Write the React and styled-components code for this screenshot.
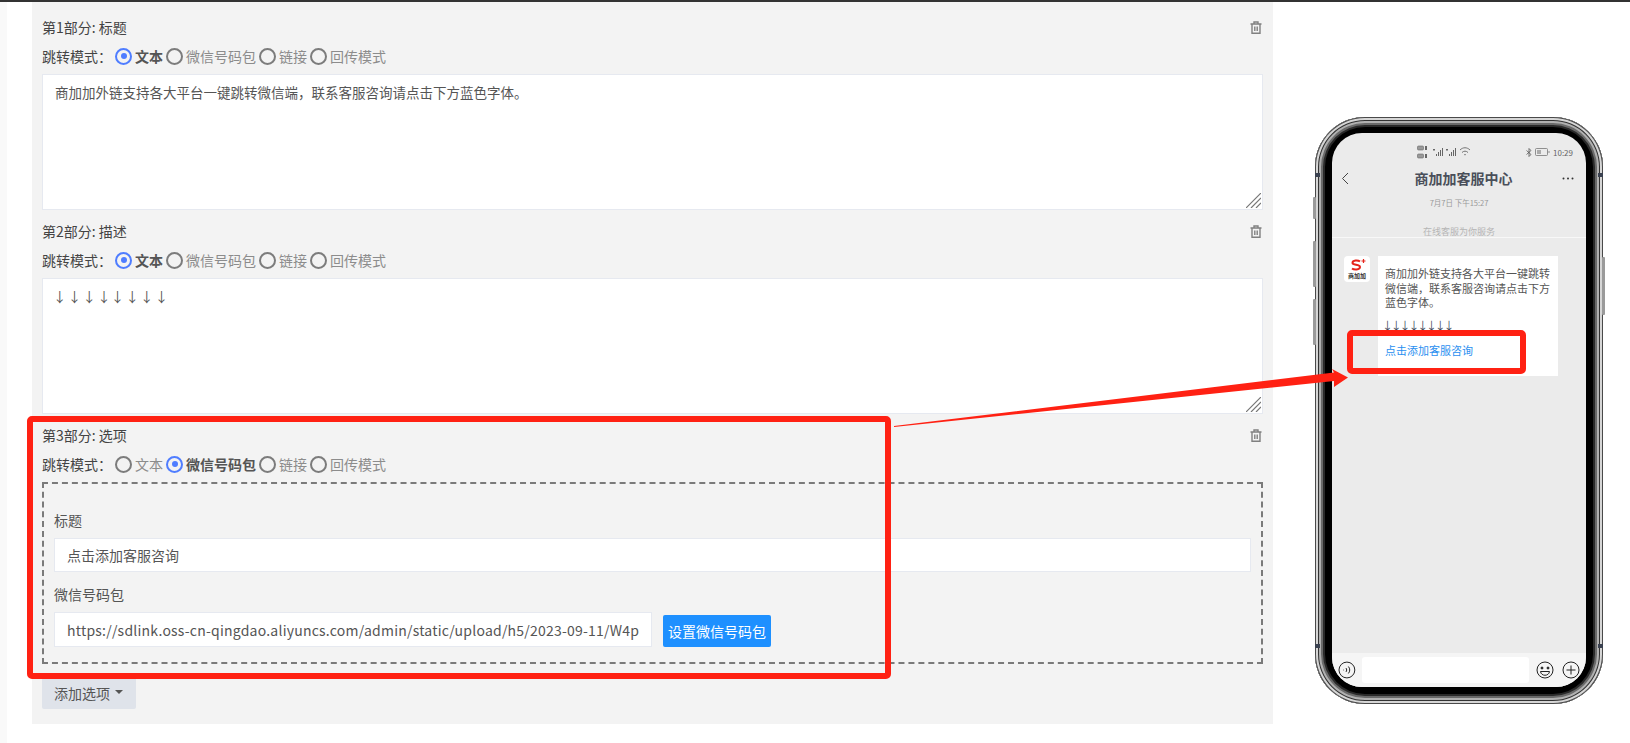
import styled, { createGlobalStyle } from "styled-components";

const GlobalStyle = createGlobalStyle`
  html, body {
    margin: 0;
    padding: 0;
    height: 743px;
    overflow: hidden;
    background: #fff;
  }
  * { box-sizing: border-box; }
`;

const FONT = `"Noto Sans CJK SC", "Noto Sans", sans-serif`;

const Page = styled.div`
  position: relative;
  display: flex;
  width: 1630px;
  height: 743px;
  border-top: 2px solid #333;
  font-family: ${FONT};
  font-size: 14px;
  color: #444;
  overflow: hidden;
`;

const Sidebar = styled.div`
  width: 7px;
  background: #f9f9f9;
`;

const Panel = styled.div`
  width: 1241px;
  height: 722px;
  margin-left: 25px;
  padding: 15px 10px 0;
  background: #f3f3f3;
`;

const Section = styled.section`
  margin-bottom: ${(p) => (p.$last ? 0 : 11)}px;
`;

const SectionHead = styled.div`
  display: flex;
  justify-content: space-between;
  align-items: center;
  height: 20px;
  line-height: 20px;
`;

const TrashBtn = styled.span`
  display: flex;
  margin-right: 1px;
  color: #808080;
`;

const ModeRow = styled.div`
  display: flex;
  align-items: center;
  height: 20px;
  margin: 9px 0 8px;
  line-height: 20px;
`;

const ModeLabel = styled.span`
  width: 73px;
  white-space: nowrap;
`;

const RadioItem = styled.label`
  display: flex;
  align-items: center;
  margin-right: 3px;
  color: ${(p) => (p.$on ? "#555" : "#8c8c8c")};
  font-weight: ${(p) => (p.$on ? 700 : 400)};
`;

const RadioDot = styled.span`
  display: flex;
  align-items: center;
  justify-content: center;
  width: 17px;
  height: 17px;
  margin-right: 3px;
  border-radius: 50%;
  border: ${(p) => (p.$on ? "2.5px solid #4f7dff" : "2px solid #7c7c7c")};

  &::after {
    content: "";
    display: ${(p) => (p.$on ? "block" : "none")};
    width: 6px;
    height: 6px;
    border-radius: 50%;
    background: #4f7dff;
  }
`;

const AreaWrap = styled.div`
  position: relative;
  height: 136px;
`;

const TextArea = styled.textarea`
  display: block;
  width: 100%;
  height: 100%;
  padding: 5px 12px;
  border: 1px solid #e6e9f0;
  background: #fff;
  color: #555;
  font: 13.5px/24px ${FONT};
  word-spacing: ${(p) => p.$wordGap || 0}px;
  text-indent: ${(p) => p.$indent || 0}px;
  resize: none;
  outline: none;
`;

const Grip = styled.svg`
  position: absolute;
  right: 2px;
  bottom: 2px;
`;

const DashedBox = styled.div`
  height: 182px;
  padding: 26px 10px 0;
  border: 2px dashed #7a7a7a;
`;

const FieldLabel = styled.div`
  height: 20px;
  margin-bottom: 8px;
  line-height: 20px;
  color: #555;
`;

const TextInput = styled.input`
  display: block;
  width: ${(p) => p.$w || "100%"};
  height: ${(p) => p.$h || 34}px;
  padding: 0 12px;
  border: 1px solid #e6e9f0;
  background: #fff;
  color: #555;
  font: 14px ${FONT};
  letter-spacing: ${(p) => p.$track || 0}px;
  outline: none;
`;

const Gap = styled.div`
  height: 12px;
`;

const InputRow = styled.div`
  display: flex;
  align-items: flex-start;
`;

const BlueBtn = styled.button`
  width: 108px;
  height: 32px;
  margin: 3px 0 0 11px;
  padding: 0;
  border: none;
  border-radius: 2px;
  background: #1e90ff;
  color: #fff;
  font: 14px ${FONT};
`;

const AddBtn = styled.button`
  display: flex;
  align-items: center;
  gap: 5px;
  width: 94px;
  height: 32px;
  margin-top: 13px;
  padding: 0 0 0 12px;
  border: none;
  border-radius: 2px;
  background: #dfe3ea;
  color: #555;
  font: 14px ${FONT};

  &::after {
    content: "";
    margin-top: -2px;
    border-top: 4px solid #555;
    border-left: 4px solid transparent;
    border-right: 4px solid transparent;
  }
`;

const RedFrame = styled.div`
  position: absolute;
  left: ${(p) => p.$x}px;
  top: ${(p) => p.$y}px;
  width: ${(p) => p.$w}px;
  height: ${(p) => p.$h}px;
  border: 6px solid #ff2113;
  border-radius: 5px;
  pointer-events: none;
`;

const ArrowLayer = styled.svg`
  position: absolute;
  left: 0;
  top: -2px;
  pointer-events: none;
`;

/* phone */
const Phone = styled.div`
  position: relative;
  width: 288px;
  height: 587px;
  margin: 115px 0 0 42px;
  padding: 16px 17px 17px;
  border-radius: 50px;
  background: #000;
  box-shadow:
    inset 0 0 0 1px #4a4a4a,
    inset 0 0 0 3px #d6d6d6,
    inset 0 0 0 4px #333,
    inset 0 0 0 6px #b0b0b0,
    inset 0 0 0 8px #6a6a6a,
    inset 0 0 0 10px #2a2a2a;
`;

const SideKey = styled.span`
  position: absolute;
  top: ${(p) => p.$y}px;
  height: ${(p) => p.$h}px;
  ${(p) => (p.$right ? "right: -2px;" : "left: -2px;")}
  width: 3px;
  background: #9a9a9a;
  border-radius: 1px;
`;

const Notch = styled.span`
  position: absolute;
  top: ${(p) => p.$y}px;
  ${(p) => (p.$right ? "right: 0;" : "left: 0;")}
  width: 5px;
  height: 4px;
  background: #3a4150;
`;

const Screen = styled.div`
  display: flex;
  flex-direction: column;
  height: 100%;
  border-radius: 30px;
  background: #ebebeb;
  overflow: hidden;
  font-size: 11px;
`;

const StatusBar = styled.div`
  display: flex;
  align-items: center;
  height: 31px;
  padding: 7px 13px 0 85px;
  color: #666;
  font-size: 8px;
`;

const StatusRight = styled.div`
  display: flex;
  align-items: center;
  gap: 3px;
  margin-left: auto;
`;

const NavBar = styled.div`
  display: flex;
  align-items: center;
  justify-content: space-between;
  height: 28px;
  padding: 0 12px 0 9px;
`;

const NavTitle = styled.div`
  margin-left: 16px;
  color: #4a4f5a;
  font-size: 14px;
  font-weight: 700;
`;

const DateText = styled.div`
  margin-top: 4px;
  height: 14px;
  line-height: 14px;
  text-align: center;
  color: #999;
  font-size: 7.5px;
`;

const NoticeText = styled.div`
  height: 28px;
  padding-top: 16px;
  line-height: 12px;
  text-align: center;
  color: #b5b5b5;
  font-size: 9px;
  border-bottom: 1px solid #f8f8f8;
`;

const ChatArea = styled.div`
  flex: 1;
  display: flex;
  align-items: flex-start;
  gap: 8px;
  padding: 18px 28px 0 12px;
`;

const Avatar = styled.div`
  display: flex;
  flex-direction: column;
  align-items: center;
  flex: none;
  width: 26px;
  height: 26px;
  padding-top: 3px;
  border-radius: 4px;
  background: #fff;
`;

const AvatarName = styled.span`
  color: #333;
  font-size: 6px;
  font-weight: 700;
  line-height: 8px;
`;

const Bubble = styled.div`
  width: 181px;
  height: 120px;
  padding: 10px 7px;
  background: #fff;
  color: #555;
  line-height: 14.5px;
`;

const BubbleArrows = styled.div`
  margin: 8px 0 0 -3px;
  white-space: nowrap;
  color: #3f4a5c;
  font-size: 11px;
  letter-spacing: -2.2px;
`;

const BubbleLink = styled.div`
  margin-top: 11px;
  color: #2a8ff0;
`;

const InputBar = styled.div`
  display: flex;
  align-items: center;
  gap: 6px;
  height: 34px;
  padding: 0 6px;
  background: #f5f5f5;
`;

const BarInput = styled.div`
  width: 169px;
  height: 26px;
  margin-right: 1px;
  border-radius: 3px;
  background: #fff;
`;

const BarIcons = styled.div`
  display: flex;
  gap: 8px;
`;

const Trash = () => (
  <svg width="12" height="13" viewBox="0 0 12 13" fill="none" stroke="currentColor" strokeWidth="1.4">
    <path d="M0.5 3h11M4 3V1h4v2M2 3v9.200h8V3M4.800 5.500v4.500M7.200 5.500v4.500" />
  </svg>
);

const ResizeGrip = () => (
  <Grip width="15" height="15" viewBox="0 0 15 15" stroke="#777" strokeWidth="1.2">
    <path d="M0 15L15 0M5 15L15 5M10 15L15 10" />
  </Grip>
);

const Bt = () => (
  <svg width="6" height="9" viewBox="0 0 6 9" fill="none" stroke="#555" strokeWidth="0.8">
    <path d="M0.500 2.500L5 6.500L3 8.500V0.500L5 2.500L0.500 6.500" />
  </svg>
);

const Battery = () => (
  <svg width="15" height="8" viewBox="0 0 15 8" fill="none" stroke="#777" strokeWidth="0.8">
    <rect x="0.500" y="0.500" width="12" height="7" rx="1" />
    <rect x="2" y="2" width="4" height="4" fill="#aaa" stroke="none" />
    <path d="M14 3v2" />
  </svg>
);

const Signals = () => (
  <svg width="56" height="14" viewBox="0 0 56 14" fill="#666">
    <rect x="0.500" y="1" width="6" height="4" rx="1" fill="#999" stroke="#666" strokeWidth="0.6" />
    <rect x="0.500" y="9" width="6" height="4" rx="1" fill="#999" stroke="#666" strokeWidth="0.6" />
    <rect x="8" y="1" width="2" height="4" />
    <rect x="8" y="9" width="2" height="4" />
    <path d="M16 4h2v1.500h-2zM19 11h1V9h-1zM21 11h1V7h-1zM23 11h1V5h-1zM25 11h1V3h-1z" />
    <path d="M29 4h2v1.500h-2zM32 11h1V9h-1zM34 11h1V7h-1zM36 11h1V5h-1zM38 11h1V3h-1z" />
    <path d="M43 5c3-3 7-3 10 0M45 7.500c2-1.800 4-1.800 6 0M47 10c.6-.6 1.400-.6 2 0" fill="none" stroke="#666" strokeWidth="0.9" />
  </svg>
);

const Logo = () => (
  <svg width="17" height="13" viewBox="0 0 17 13" fill="none">
    <path d="M11 2.500C9 1 3.500 1 3.500 4C3.500 6.500 11 5 11 8C11 11 5 11 3 9.500" stroke="#e5231b" strokeWidth="2" />
    <path d="M14.500 0v4M12.500 2h4" stroke="#e5231b" strokeWidth="1.200" />
  </svg>
);

const Circle = ({ children }) => (
  <svg width="18" height="18" viewBox="0 0 18 18" fill="none" stroke="#222" strokeWidth="1">
    <circle cx="9" cy="9" r="8" />
    {children}
  </svg>
);

const Chevron = () => (
  <svg width="8" height="13" viewBox="0 0 8 13" fill="none" stroke="#444" strokeWidth="1">
    <path d="M7 1L1.500 6.500L7 12" />
  </svg>
);

const Dots = () => (
  <svg width="12" height="3" viewBox="0 0 12 3" fill="#333">
    <circle cx="1.500" cy="1.500" r="1" />
    <circle cx="6" cy="1.500" r="1" />
    <circle cx="10.500" cy="1.500" r="1" />
  </svg>
);

const MODES = ["文本", "微信号码包", "链接", "回传模式"];

// \uFF0C = full-width comma, \uFF1A = full-width colon
const INTRO = "商加加外链支持各大平台一键跳转微信端\uFF0C联系客服咨询请点击下方蓝色字体。";

const ModeSwitch = ({ active }) => (
  <ModeRow>
    <ModeLabel>{"跳转模式\uFF1A"}</ModeLabel>
    {MODES.map((m, i) => (
      <RadioItem key={m} $on={i === active}>
        <RadioDot $on={i === active} />
        {m}
      </RadioItem>
    ))}
  </ModeRow>
);

const SectionTitle = ({ title }) => (
  <SectionHead>
    {title}
    <TrashBtn>
      <Trash />
    </TrashBtn>
  </SectionHead>
);

const TextPart = ({ title, text, wordGap, indent }) => (
  <Section>
    <SectionTitle title={title} />
    <ModeSwitch active={0} />
    <AreaWrap>
      <TextArea readOnly defaultValue={text} $wordGap={wordGap} $indent={indent} />
      <ResizeGrip />
    </AreaWrap>
  </Section>
);

const PhoneMock = () => (
  <Phone>
    <SideKey $y={80} $h={22} />
    <SideKey $y={124} $h={46} />
    <SideKey $y={182} $h={46} />
    <SideKey $right $y={140} $h={58} />
    <Notch $y={56} />
    <Notch $right $y={56} />
    <Notch $y={527} />
    <Notch $right $y={527} />
    <Screen>
      <StatusBar>
        <Signals />
        <StatusRight>
          <Bt />
          <Battery />
          10:29
        </StatusRight>
      </StatusBar>
      <NavBar>
        <Chevron />
        <NavTitle>商加加客服中心</NavTitle>
        <Dots />
      </NavBar>
      <DateText>7月7日 下午15:27</DateText>
      <NoticeText>在线客服为你服务</NoticeText>
      <ChatArea>
        <Avatar>
          <Logo />
          <AvatarName>商加加</AvatarName>
        </Avatar>
        <Bubble>
          {INTRO}
          <BubbleArrows>↓↓↓↓↓↓↓↓</BubbleArrows>
          <BubbleLink>点击添加客服咨询</BubbleLink>
        </Bubble>
      </ChatArea>
      <InputBar>
        <Circle>
          <path d="M5.500 9h.6M8 7c1 1 1 3 0 4M10.500 5.500c1.800 2 1.800 5 0 7" />
        </Circle>
        <BarInput />
        <BarIcons>
          <Circle>
            <circle cx="6" cy="7" r="1" fill="#222" />
            <circle cx="12" cy="7" r="1" fill="#222" />
            <path d="M4.500 10.500h9c-.5 5-8.500 5-9 0z" />
          </Circle>
          <Circle>
            <path d="M4.500 9h9M9 4.500v9" />
          </Circle>
        </BarIcons>
      </InputBar>
    </Screen>
  </Phone>
);

export default function App() {
  return (
    <>
      <GlobalStyle />
      <Page>
        <Sidebar />
        <Panel>
          <TextPart title="第1部分: 标题" text={INTRO} />
          <TextPart title="第2部分: 描述" text="↓ ↓ ↓ ↓↓ ↓ ↓ ↓" wordGap={-1.8} indent={-2} />
          <Section $last>
            <SectionTitle title="第3部分: 选项" />
            <ModeSwitch active={1} />
            <DashedBox>
              <FieldLabel>标题</FieldLabel>
              <TextInput readOnly value="点击添加客服咨询" />
              <Gap />
              <FieldLabel>微信号码包</FieldLabel>
              <InputRow>
                <TextInput
                  $w="598px"
                  $h={35}
                  $track={0.22}
                  readOnly
                  value="https://sdlink.oss-cn-qingdao.aliyuncs.com/admin/static/upload/h5/2023-09-11/W4p"
                />
                <BlueBtn>设置微信号码包</BlueBtn>
              </InputRow>
            </DashedBox>
          </Section>
          <AddBtn>添加选项</AddBtn>
        </Panel>
        <PhoneMock />
        <RedFrame $x={27} $y={414} $w={864} $h={263} />
        <RedFrame $x={1347} $y={328} $w={179} $h={44} />
        <ArrowLayer width="1630" height="743" viewBox="0 0 1630 743">
          <polygon points="894,426 1334,372.500 1332,369 1348,377.500 1334,387 1334,381 894,427" fill="#ff2113" />
        </ArrowLayer>
      </Page>
    </>
  );
}
